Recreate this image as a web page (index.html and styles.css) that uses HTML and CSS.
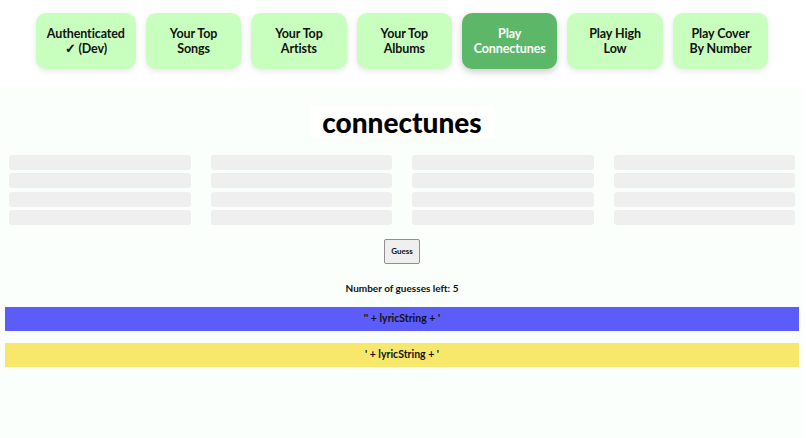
FILE: index.html
```html
<!DOCTYPE html>
<html lang="en">
<head>
    <meta charset="UTF-8">
    <meta name="viewport" content="width=device-width, initial-scale=1.0">
    <title>connectunes</title>
    <link rel="stylesheet" href="styles.css">
</head>
<body>
    <nav class="nav">
        <a class="nav-btn nav-btn-wide">Authenticated<br>✓ (Dev)</a>
        <a class="nav-btn">Your Top<br>Songs</a>
        <a class="nav-btn">Your Top<br>Artists</a>
        <a class="nav-btn">Your Top<br>Albums</a>
        <a class="nav-btn active">Play<br>Connectunes</a>
        <a class="nav-btn">Play High<br>Low</a>
        <a class="nav-btn">Play Cover<br>By Number</a>
    </nav>

    <main class="main">
        <h1 class="title">connectunes</h1>

        <div class="board">
            <div class="column">
                <div class="slot"></div>
                <div class="slot"></div>
                <div class="slot"></div>
                <div class="slot"></div>
            </div>
            <div class="column">
                <div class="slot"></div>
                <div class="slot"></div>
                <div class="slot"></div>
                <div class="slot"></div>
            </div>
            <div class="column">
                <div class="slot"></div>
                <div class="slot"></div>
                <div class="slot"></div>
                <div class="slot"></div>
            </div>
            <div class="column">
                <div class="slot"></div>
                <div class="slot"></div>
                <div class="slot"></div>
                <div class="slot"></div>
            </div>
        </div>

        <button class="guess-btn">Guess</button>

        <p class="guesses">Number of guesses left: 5</p>

        <div class="lyric lyric-blue">'' + lyricString + '</div>
        <div class="lyric lyric-yellow">' + lyricString + '</div>
    </main>
</body>
</html>
```

FILE: styles.css
```css
* {
    margin: 0;
    padding: 0;
    box-sizing: border-box;
}

html {
    height: 100%;
    background-color: #fff;
}

body {
    width: 804px;
    height: 100%;
    font-family: "Lato", "Noto Sans", sans-serif;
    font-weight: 700;
    color: #111;
    display: flex;
    flex-direction: column;
    overflow: hidden;
}

.nav {
    display: flex;
    justify-content: center;
    gap: 10px;
    height: 88px;
    padding-top: 13px;
}

.nav-btn {
    width: 95.4px;
    height: 56px;
    display: flex;
    align-items: center;
    justify-content: center;
    text-align: center;
    font-size: 12.5px;
    letter-spacing: -0.1px;
    line-height: 15.5px;
    background: #c8ffbe;
    border-radius: 10px;
    box-shadow: 0 2px 6px rgba(0, 0, 0, 0.1);
}

.nav-btn-wide {
    width: 100px;
}

.nav-btn.active {
    background: #5cb868;
    color: #fff;
    box-shadow: 0 3px 7px rgba(0, 0, 0, 0.2);
}

.main {
    flex: 1;
    background-color: #fafffc;
    display: flex;
    flex-direction: column;
    align-items: center;
    padding-top: 19px;
}

.title {
    width: 184px;
    height: 31px;
    background: #fff;
    font-size: 28px;
    line-height: 31px;
    font-weight: 900;
    text-align: center;
    color: #000;
}

.board {
    width: 100%;
    display: grid;
    grid-template-columns: repeat(4, 1fr);
    gap: 20px;
    padding: 0 9px;
    margin-top: 17px;
}

.column {
    display: flex;
    flex-direction: column;
    gap: 3.3px;
}

.slot {
    height: 15px;
    background: #efefef;
    border-radius: 3px;
}

.guess-btn {
    width: 36px;
    height: 25px;
    margin-top: 14px;
    font-family: inherit;
    font-weight: 700;
    font-size: 8px;
    color: #111;
    background: #efefef;
    border: 1px solid #8f8f8f;
    border-radius: 2px;
}

.guesses {
    font-size: 10px;
    line-height: 14px;
    margin-top: 17px;
}

.lyric {
    width: calc(100% - 10px);
    height: 24px;
    font-size: 10.5px;
    line-height: 22px;
    text-align: center;
}

.lyric-blue {
    background: #5c5cf8;
    margin-top: 12px;
}

.lyric-yellow {
    background: #f7e86c;
    margin-top: 12px;
}
```
